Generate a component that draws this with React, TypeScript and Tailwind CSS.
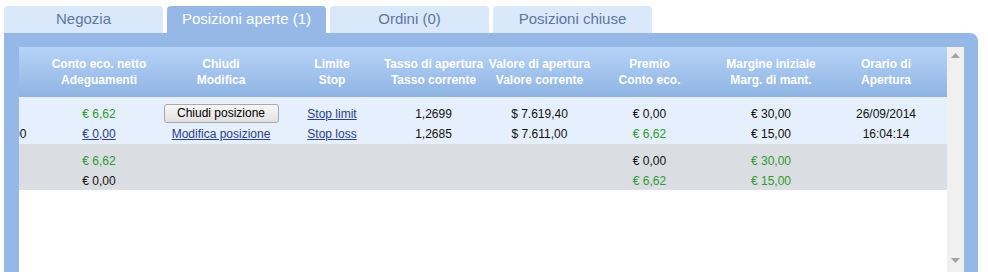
import React from "react";

type Cell = { text: string; color?: "green" | "black"; link?: boolean; button?: boolean };

const cols = [
    { w: "w-[60px]", h1: "", h2: "" },
    { w: "w-[122px]", h1: "Conto eco. netto", h2: "Adeguamenti" },
    { w: "w-[122px]", h1: "Chiudi", h2: "Modifica" },
    { w: "w-[100px]", h1: "Limite", h2: "Stop" },
    { w: "w-[103px]", h1: "Tasso di apertura", h2: "Tasso corrente" },
    { w: "w-[109px]", h1: "Valore di apertura", h2: "Valore corrente" },
    { w: "w-[111px]", h1: "Premio", h2: "Conto eco." },
    { w: "w-[132px]", h1: "Margine iniziale", h2: "Marg. di mant." },
    { w: "w-[98px]", h1: "Orario di", h2: "Apertura" },
];

const row1: [Cell, Cell][] = [
    [{ text: "" }, { text: "10.000" }],
    [{ text: "€ 6,62", color: "green" }, { text: "€ 0,00", link: true }],
    [{ text: "Chiudi posizione", button: true }, { text: "Modifica posizione", link: true }],
    [{ text: "Stop limit", link: true }, { text: "Stop loss", link: true }],
    [{ text: "1,2699" }, { text: "1,2685" }],
    [{ text: "$ 7.619,40" }, { text: "$ 7.611,00" }],
    [{ text: "€ 0,00" }, { text: "€ 6,62", color: "green" }],
    [{ text: "€ 30,00" }, { text: "€ 15,00" }],
    [{ text: "26/09/2014" }, { text: "16:04:14" }],
];

const row2: [Cell, Cell][] = [
    [{ text: "" }, { text: "" }],
    [{ text: "€ 6,62", color: "green" }, { text: "€ 0,00" }],
    [{ text: "" }, { text: "" }],
    [{ text: "" }, { text: "" }],
    [{ text: "" }, { text: "" }],
    [{ text: "" }, { text: "" }],
    [{ text: "€ 0,00" }, { text: "€ 6,62", color: "green" }],
    [{ text: "€ 30,00", color: "green" }, { text: "€ 15,00", color: "green" }],
    [{ text: "" }, { text: "" }],
];

const CellView = ({ c }: { c: Cell }) => {
    if (c.button) {
        return (
            <div className="h-[20px] flex items-start justify-center">
                <button className="h-[19px] w-[115px] text-[12px] text-black border border-[#a9a9a9] rounded-[3px] bg-gradient-to-b from-[#f7f7f7] to-[#e1e1e1] leading-[17px]">
                    {c.text}
                </button>
            </div>
        );
    }
    return (
        <div
            className={
                "h-[20px] leading-[20px] text-center whitespace-nowrap " +
                (c.link ? "text-[#2c3e8c] underline" : c.color === "green" ? "text-[#2f9a2f]" : "text-[#111]")
            }
        >
            {c.text}
        </div>
    );
};

const tabs = [
    { label: "Negozia", active: false },
    { label: "Posizioni aperte (1)", active: true },
    { label: "Ordini (0)", active: false },
    { label: "Posizioni chiuse", active: false },
];

export default function App() {
    return (
        <div className="w-[988px] h-[272px] bg-white overflow-hidden font-['Liberation_Sans',Arial,sans-serif] text-[12px]">
            <div className="flex gap-[4px] pl-[4px] pt-[6px]">
                {tabs.map((t) => (
                    <div
                        key={t.label}
                        className={
                            "w-[159px] h-[27px] rounded-t-[4px] flex items-center justify-center text-[15px] " +
                            (t.active ? "bg-[#95b8e6] text-white" : "bg-[#d9e8fb] text-[#5d77a0]")
                        }
                    >
                        {t.label}
                    </div>
                ))}
            </div>
            <div className="ml-[4px] w-[974px] h-[239px] bg-[#95b8e6] rounded-tr-[8px] pl-[15px] pr-[14px] pt-[14px]">
                <div className="flex h-full bg-white">
                    <div className="flex-1 overflow-hidden">
                        <div className="ml-[-41px] w-[1000px]">
                            <div className="flex h-[50px] bg-gradient-to-b from-[#b6d4f8] to-[#8fb3e2] text-white font-bold items-center">
                                {cols.map((c, i) => (
                                    <div key={i} className={c.w + " shrink-0 text-center leading-[16px] whitespace-nowrap"}>
                                        <div>{c.h1}</div>
                                        <div>{c.h2}</div>
                                    </div>
                                ))}
                            </div>
                            <div className="flex bg-[#e5effd] h-[47px] pt-[7px]">
                                {cols.map((c, i) => (
                                    <div key={i} className={c.w + " shrink-0"}>
                                        <CellView c={row1[i][0]} />
                                        <CellView c={row1[i][1]} />
                                    </div>
                                ))}
                            </div>
                            <div className="flex bg-[#dadde1] h-[46px] pt-[7px] w-[969px] overflow-hidden">
                                {cols.map((c, i) => (
                                    <div key={i} className={c.w + " shrink-0"}>
                                        <CellView c={row2[i][0]} />
                                        <CellView c={row2[i][1]} />
                                    </div>
                                ))}
                            </div>
                        </div>
                    </div>
                    <div className="w-[17px] shrink-0 bg-[#f0f0f0] flex flex-col justify-between items-center py-[6px]">
                        <svg width="9" height="5" viewBox="0 0 9 5">
                            <path d="M0 5 L4.5 0 L9 5 Z" fill="#a3a3a3" />
                        </svg>
                        <svg width="9" height="5" viewBox="0 0 9 5" className="mb-[3px]">
                            <path d="M0 0 L9 0 L4.5 5 Z" fill="#a3a3a3" />
                        </svg>
                    </div>
                </div>
            </div>
        </div>
    );
}
